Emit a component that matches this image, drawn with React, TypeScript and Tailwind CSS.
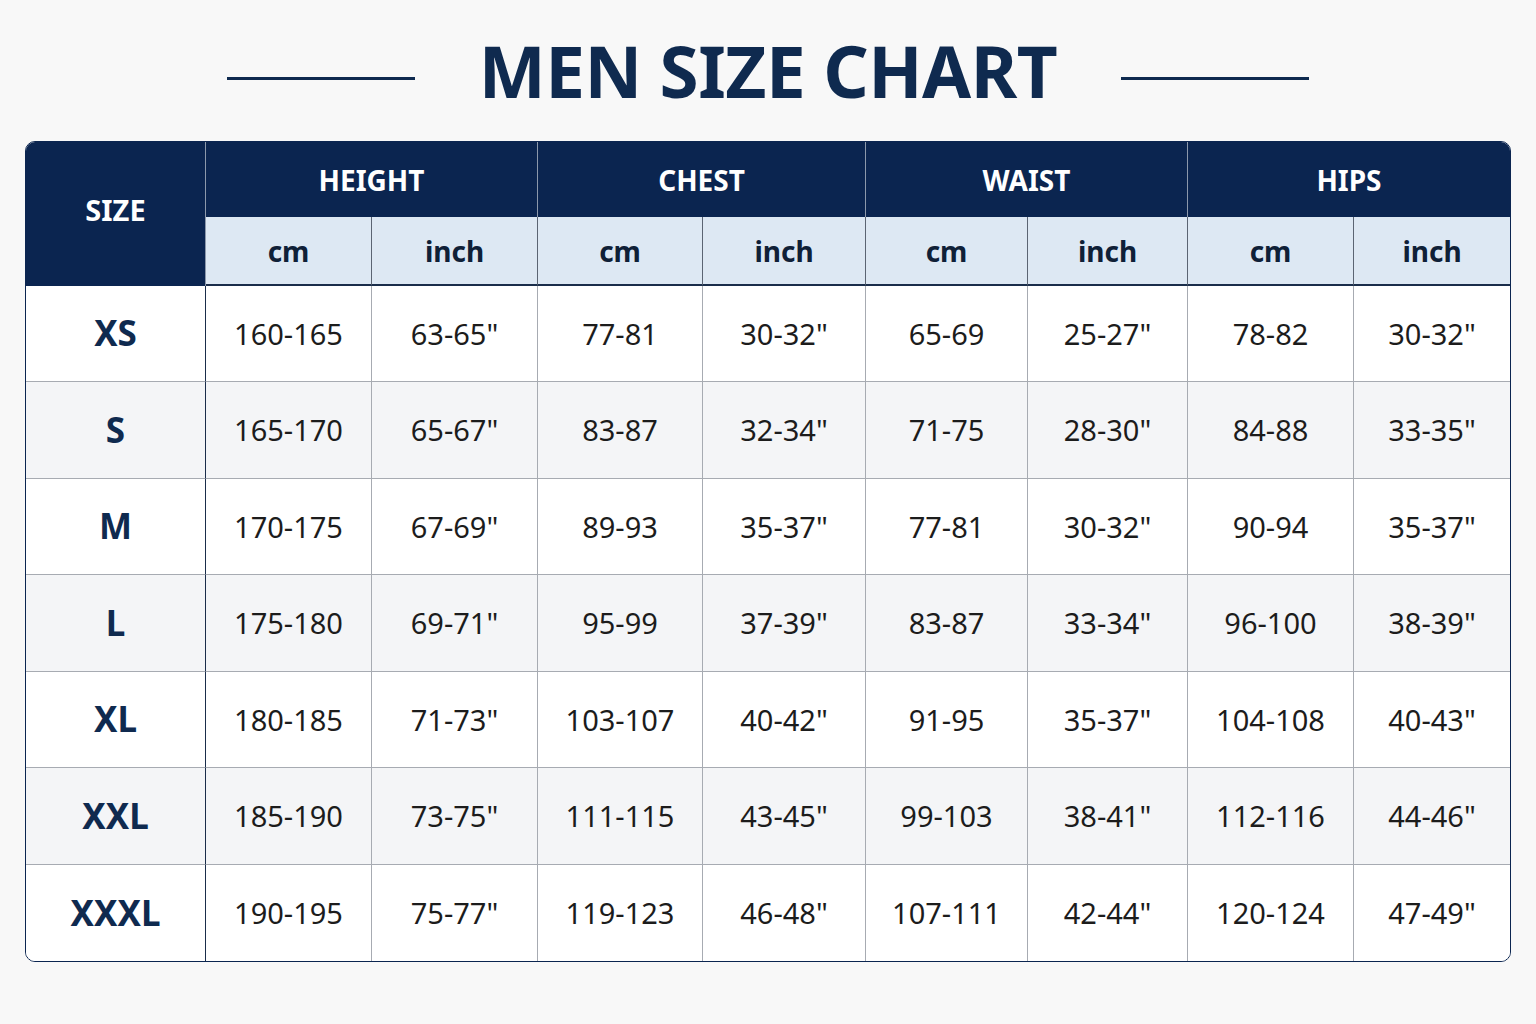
import React from 'react'

type Row = {
  size: string
  values: string[]
}

const GROUPS = ['HEIGHT', 'CHEST', 'WAIST', 'HIPS']

const ROWS: Row[] = [
  { size: 'XS', values: ['160-165', '63-65"', '77-81', '30-32"', '65-69', '25-27"', '78-82', '30-32"'] },
  { size: 'S', values: ['165-170', '65-67"', '83-87', '32-34"', '71-75', '28-30"', '84-88', '33-35"'] },
  { size: 'M', values: ['170-175', '67-69"', '89-93', '35-37"', '77-81', '30-32"', '90-94', '35-37"'] },
  { size: 'L', values: ['175-180', '69-71"', '95-99', '37-39"', '83-87', '33-34"', '96-100', '38-39"'] },
  { size: 'XL', values: ['180-185', '71-73"', '103-107', '40-42"', '91-95', '35-37"', '104-108', '40-43"'] },
  { size: 'XXL', values: ['185-190', '73-75"', '111-115', '43-45"', '99-103', '38-41"', '112-116', '44-46"'] },
  { size: 'XXXL', values: ['190-195', '75-77"', '119-123', '46-48"', '107-111', '42-44"', '120-124', '47-49"'] },
]

export default function App() {
  return (
    <div className="min-h-screen bg-[#f8f8f8] font-['Noto_Sans','Open_Sans',sans-serif]">
      {/* Title */}
      <div className="flex items-center justify-center gap-[64px] h-[141px] pb-[22px] pt-[22px]">
        <div className="w-[188px] h-[3px] bg-[#0f2a4f] mt-[16px]" />
        <h1 className="text-[71px] leading-none font-bold text-[#0f2a4f] tracking-[-0.5px]">MEN SIZE CHART</h1>
        <div className="w-[188px] h-[3px] bg-[#0f2a4f] mt-[16px]" />
      </div>

      {/* Table */}
      <div className="mx-[25px] w-[1486px] rounded-[10px] border border-[#0b2550] overflow-hidden bg-white">
        <div className="grid h-[819px] grid-cols-[180px_166px_166px_165px_163px_162px_160px_166px_156px] grid-rows-[75px_69px_repeat(7,1fr)]">
          <div className="row-span-2 bg-[#0b2550] text-white text-[29px] font-bold flex items-center justify-center pb-[8px] border-r border-[#8c98ab]">
            SIZE
          </div>
          {GROUPS.map((g, i) => (
            <div
              key={g}
              className={`col-span-2 bg-[#0b2550] text-white text-[28px] font-bold flex items-center justify-center ${
                i < GROUPS.length - 1 ? 'border-r border-[#8c98ab]' : ''
              }`}
            >
              {g}
            </div>
          ))}
          {GROUPS.map((g, i) =>
            ['cm', 'inch'].map((u, j) => (
              <div
                key={g + u}
                className={`bg-[#dde8f3] text-[#0f2037] text-[28px] font-bold flex items-center justify-center border-b-2 border-b-[#1a2d4a] ${
                  i === GROUPS.length - 1 && j === 1 ? '' : 'border-r border-r-[#5b6472]'
                }`}
              >
                {u}
              </div>
            ))
          )}
          {ROWS.map((row, r) => {
            const bg = r % 2 === 1 ? 'bg-[#f4f5f7]' : 'bg-white'
            const bottom = r < ROWS.length - 1 ? 'border-b border-b-[#a7abb2]' : ''
            return (
              <React.Fragment key={row.size}>
                <div
                  className={`${bg} ${bottom} border-r border-r-[#1a2d4a] flex items-center justify-center text-[35px] font-bold text-[#0f2a4f]`}
                >
                  {row.size}
                </div>
                {row.values.map((v, c) => (
                  <div
                    key={c}
                    className={`${bg} ${bottom} ${
                      c < row.values.length - 1 ? 'border-r border-r-[#a7abb2]' : ''
                    } flex items-center justify-center text-[29px] text-[#1c1c1c]`}
                  >
                    {v}
                  </div>
                ))}
              </React.Fragment>
            )
          })}
        </div>
      </div>
    </div>
  )
}
